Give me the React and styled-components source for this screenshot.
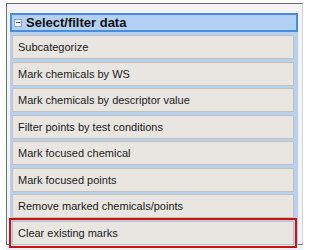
import React from "react";
import styled, { createGlobalStyle } from "styled-components";

const GlobalStyle = createGlobalStyle`
  body {
    margin: 0;
    background: #ffffff;
    font-family: "Liberation Sans", Arial, sans-serif;
  }
`;

const Page = styled.div`
  width: 324px;
  height: 250px;
  padding: 3px 0 0 6px;
  box-sizing: border-box;
`;

const Panel = styled.div`
  width: 297px;
  height: 242px;
  box-sizing: border-box;
  background: #f6f3f7;
  border-top: 1px solid #6e6e6e;
  border-left: 1px solid #6e6e6e;
  border-bottom: 1px solid #6e6e6e;
  border-right: 1px solid #d3d7e2;
  padding: 9px 0 0 3px;
`;

const BottomStrip = styled.div`
  width: 297px;
  height: 6px;
  background: #eef2fa;
`;

const Group = styled.div`
  width: 288px;
  display: flex;
  flex-direction: column;
`;

const Header = styled.div`
  height: 19px;
  box-sizing: border-box;
  background: #b3d0f5;
  border: 2px solid #4a8de0;
  display: flex;
  align-items: center;
  gap: 4px;
  padding-left: 2px;
`;

const Toggle = styled.span`
  width: 8px;
  height: 8px;
  box-sizing: border-box;
  border: 1px solid #8fa3bd;
  background: #f3f6fb;
  display: flex;
  align-items: center;
  justify-content: center;
  &::after {
    content: "";
    width: 4px;
    height: 1px;
    background: #4f5b6b;
  }
`;

const Title = styled.span`
  font-size: 13px;
  font-weight: 700;
  color: #111;
`;

const List = styled.div`
  background: #b7d1f0;
  padding: 3px 4px 0 2px;
  display: flex;
  flex-direction: column;
  gap: 2.5px;
`;

const Item = styled.div`
  height: 24px;
  box-sizing: border-box;
  background: #e9e6e1;
  border: 1px solid #c6c1b8;
  display: flex;
  align-items: center;
  padding-left: 5px;
  font-size: 11px;
  color: #1a1a1a;
  outline: ${({ $marked }) => ($marked ? "2px solid #cc1111" : "none")};
  outline-offset: 1px;
`;

const items = [
  "Subcategorize",
  "Mark chemicals by WS",
  "Mark chemicals by descriptor value",
  "Filter points by test conditions",
  "Mark focused chemical",
  "Mark focused points",
  "Remove marked chemicals/points",
  "Clear existing marks",
];

export default function App() {
  return (
    <>
      <GlobalStyle />
      <Page>
        <Panel>
          <Group>
            <Header>
              <Toggle />
              <Title>Select/filter data</Title>
            </Header>
            <List>
              {items.map((label, i) => (
                <Item key={label} $marked={i === items.length - 1}>
                  {label}
                </Item>
              ))}
            </List>
          </Group>
        </Panel>
        <BottomStrip />
      </Page>
    </>
  );
}
